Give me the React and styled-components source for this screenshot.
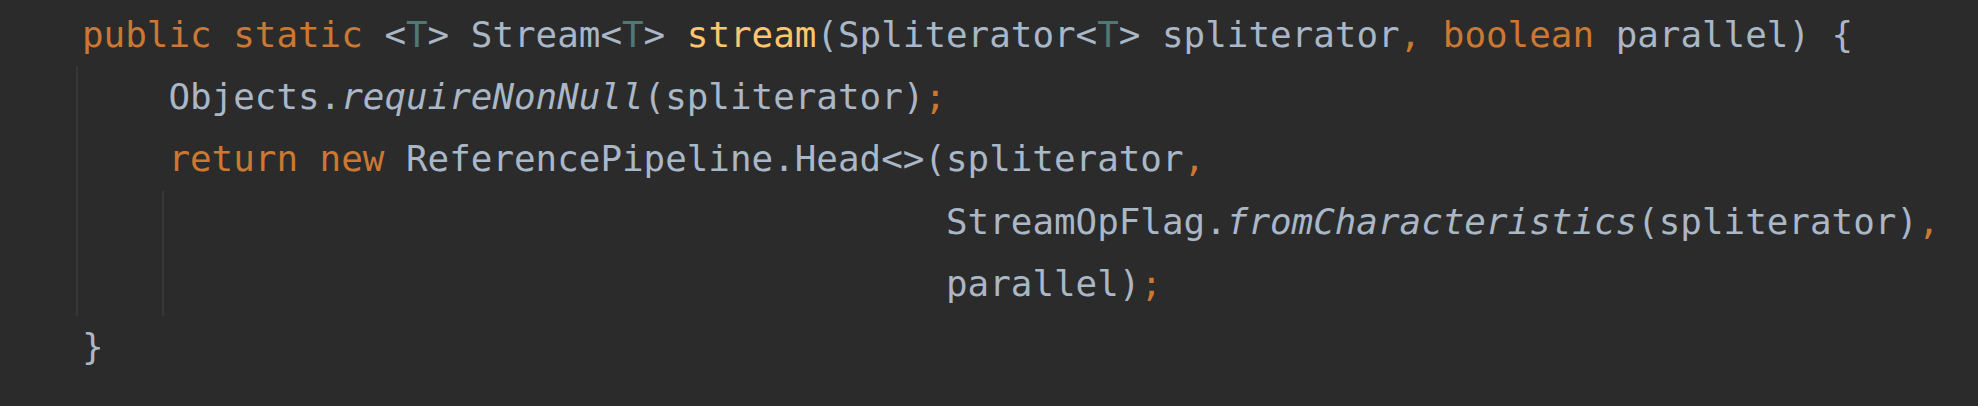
import styled, { createGlobalStyle } from "styled-components";

const CH = 21.6;

const colors = {
  plain: "#a9b7c6",
  kw: "#cc7832",
  fn: "#ffc66d",
  tp: "#507874",
  it: "#a9b7c6",
};

const GlobalStyle = createGlobalStyle`
  html, body {
    margin: 0;
    padding: 0;
    background: #2b2b2b;
  }
`;

const Editor = styled.pre`
  margin: 0;
  width: 1978px;
  height: 406px;
  box-sizing: border-box;
  padding: 3.7px 0 0 76px;
  background: #2b2b2b;
  font-family: "DejaVu Sans Mono", "Liberation Mono", monospace;
  font-size: 35.88px;
  line-height: 62.4px;
  color: ${colors.plain};
  overflow: hidden;
`;

// indent guide block: the guide is drawn as an inset shadow so it takes no width
const GuideBlock = styled.div`
  margin-left: ${(p) => p.$col * CH}px;
  box-shadow: inset 2px 0 0 #373737;
`;

const Line = styled.div`
  height: 62.4px;
  padding-left: ${(p) => p.$indent * CH + 6}px;
  white-space: pre;
`;

const Token = styled.span`
  color: ${(p) => colors[p.$kind || "plain"]};
  font-style: ${(p) => (p.$kind === "it" ? "italic" : "normal")};
`;

const CodeLine = ({ indent = 0, tokens }) => (
  <Line $indent={indent}>
    {tokens.map(([text, kind], i) => (
      <Token key={i} $kind={kind}>
        {text}
      </Token>
    ))}
  </Line>
);

const App = () => (
  <>
    <GlobalStyle />
    <Editor>
      <CodeLine
        tokens={[
          ["public", "kw"],
          [" "],
          ["static", "kw"],
          [" <"],
          ["T", "tp"],
          ["> Stream<"],
          ["T", "tp"],
          ["> "],
          ["stream", "fn"],
          ["(Spliterator<"],
          ["T", "tp"],
          ["> spliterator"],
          [",", "kw"],
          [" "],
          ["boolean", "kw"],
          [" parallel) {"],
        ]}
      />
      <GuideBlock $col={0}>
        <CodeLine
          indent={4}
          tokens={[
            ["Objects."],
            ["requireNonNull", "it"],
            ["(spliterator)"],
            [";", "kw"],
          ]}
        />
        <CodeLine
          indent={4}
          tokens={[
            ["return", "kw"],
            [" "],
            ["new", "kw"],
            [" ReferencePipeline.Head<>(spliterator"],
            [",", "kw"],
          ]}
        />
        <GuideBlock $col={4}>
          <CodeLine
            indent={36}
            tokens={[
              ["StreamOpFlag."],
              ["fromCharacteristics", "it"],
              ["(spliterator)"],
              [",", "kw"],
            ]}
          />
          <CodeLine indent={36} tokens={[["parallel)"], [";", "kw"]]} />
        </GuideBlock>
      </GuideBlock>
      <CodeLine tokens={[["}"]]} />
    </Editor>
  </>
);

export default App;
